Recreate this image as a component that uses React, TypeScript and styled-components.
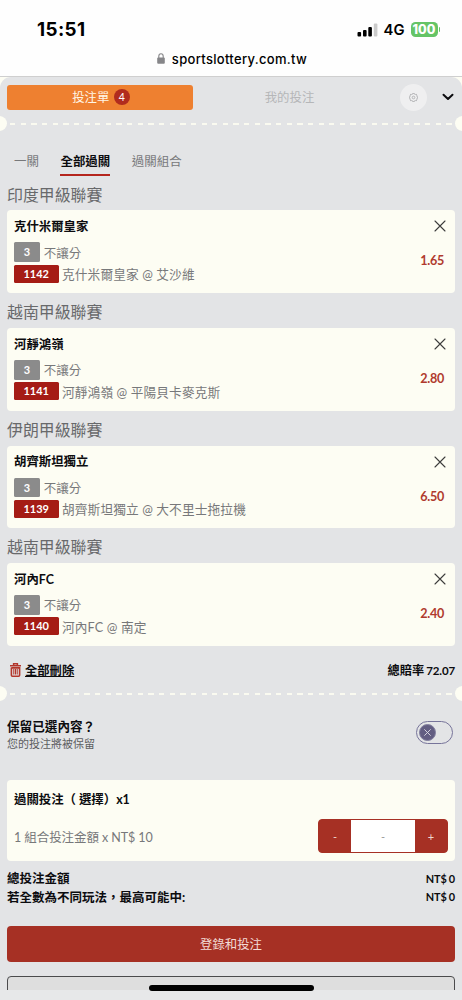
import React from 'react';
import styled, { createGlobalStyle } from 'styled-components';

const red = '#a63024';
const cream = '#fdfdf3';
const gray = '#e3e4e6';

const Global = createGlobalStyle`
  * { box-sizing: border-box; }
  body { margin: 0; background: ${gray}; font-family: Lato, "Noto Sans CJK TC", sans-serif; color: #0c0c0f; }
  button { font: inherit; border: 0; padding: 0; margin: 0; background: none; color: inherit; display: flex; align-items: center; justify-content: center; }
`;

const Screen = styled.div`
  width: 462px;
  height: 1000px;
  overflow: hidden;
  position: relative;
  display: flex;
  flex-direction: column;
  white-space: nowrap;
`;

const BrowserBar = styled.header`
  height: 77px;
  flex: none;
  background: #fefefe;
  border-bottom: 1px solid #cfcfcf;
  font-family: Inter, "Liberation Sans", sans-serif;
  color: #000;
`;

const StatusRow = styled.div`
  display: flex;
  align-items: center;
  height: 48px;
  padding: 11px 22px 0 37px;
`;

const Clock = styled.div`
  flex: 1;
  font-size: 18.8px;
  font-weight: 700;
  letter-spacing: 0.4px;
`;

const Network = styled.div`
  font-size: 14.8px;
  font-weight: 600;
  margin: 0 6px 0 6px;
`;

const Battery = styled.div`
  display: flex;
  align-items: center;
  gap: 1px;
`;

const BatteryLevel = styled.div`
  width: 27px;
  height: 15px;
  border-radius: 4.5px;
  background: #65c466;
  color: #fff;
  font-size: 12.5px;
  font-weight: 800;
  line-height: 15px;
  text-align: center;
`;

const BatteryTip = styled.div`
  width: 1.5px;
  height: 5px;
  border-radius: 0 2px 2px 0;
  background: #65c466;
`;

const AddressRow = styled.div`
  display: flex;
  justify-content: center;
  align-items: center;
  gap: 7px;
  height: 21px;
  padding-left: 2px;
  font-size: 13px;
  font-weight: 500;
  letter-spacing: 0.32px;
`;

const Corners = styled.div`
  background: ${cream};
  flex: 1;
  min-height: 0;
`;

const Slip = styled.main`
  height: 913px;
  overflow: hidden;
  background: ${gray};
  border-radius: 11px 11px 0 0;
  padding: 7px 7px 0;
  display: flex;
  flex-direction: column;
`;

const Header = styled.div`
  display: flex;
  align-items: center;
  height: 26px;
  flex: none;
`;

const SlipTab = styled.button`
  && {
    width: 186px;
    height: 25px;
    padding-left: 2px;
    border-radius: 3px;
    background: #ee8030;
    color: #fff6e6;
    font-size: 12.4px;
    gap: 4.5px;
  }
`;

const Count = styled.span`
  width: 16px;
  height: 16px;
  border-radius: 50%;
  background: #b12c1e;
  color: #fff;
  font-size: 10.5px;
  line-height: 16px;
  text-align: center;
`;

const MyBets = styled.button`
  && {
    width: 193px;
    color: #b5b6b8;
    font-size: 12.4px;
  }
`;

const GearButton = styled.button`
  && {
    width: 27px;
    height: 27px;
    margin-left: 14px;
    border-radius: 50%;
    background: #efeff0;
  }
`;

const Collapse = styled.button`
  && { margin-left: 15px; }
`;

const Perforation = styled.div<{ $top: number }>`
  display: flex;
  align-items: center;
  height: 15px;
  flex: none;
  margin: ${p => p.$top}px -15px 0;
`;

const Notch = styled.i`
  width: 15px;
  height: 15px;
  flex: none;
  border-radius: 50%;
  background: ${cream};
`;

const Dashes = styled.i`
  flex: 1;
  height: 2px;
  margin: 1px 2px 0 3px;
  background: repeating-linear-gradient(90deg, #fafaf0 0 5.3px, transparent 5.3px 10.64px);
`;

const Tabs = styled.nav`
  display: flex;
  gap: 21.6px;
  height: 44.6px;
  padding: 20px 0 0 7px;
  flex: none;
`;

const Tab = styled.button<{ $active?: boolean }>`
  && {
    height: 25px;
    padding-bottom: 3px;
    font-size: 12.45px;
    font-weight: ${p => (p.$active ? 700 : 400)};
    color: ${p => (p.$active ? '#0c0c0f' : '#77787a')};
    border-bottom: 2.5px solid ${p => (p.$active ? '#b5261e' : 'transparent')};
    align-items: flex-end;
    line-height: 18px;
  }
`;

const League = styled.section`
  height: 117.6px;
  flex: none;
`;

const LeagueName = styled.h2`
  margin: 0;
  height: 34.8px;
  padding-top: 7px;
  line-height: 24px;
  font-size: 15.9px;
  font-weight: 400;
  color: #68696b;
`;

const Card = styled.article`
  display: flex;
  justify-content: space-between;
  height: 82.8px;
  border-radius: 4px;
  background: ${cream};
  padding: 7.4px 7px 0;
`;

const PickInfo = styled.div`
  display: flex;
  flex-direction: column;
  padding-top: 0.3px;
`;

const Team = styled.h3`
  margin: 0 0 5.1px;
  font-size: 12.4px;
  line-height: 18px;
  font-weight: 700;
`;

const Line = styled.div<{ $wide?: boolean }>`
  display: flex;
  align-items: center;
  gap: ${p => (p.$wide ? 3.5 : 4)}px;
  height: ${p => (p.$wide ? 21 : 22)}px;
  font-size: ${p => (p.$wide ? 12.7 : 12.5)}px;
  letter-spacing: ${p => (p.$wide ? 0.12 : 0)}px;
  color: #77787a;
`;

const Tag = styled.span<{ $red?: boolean }>`
  width: ${p => (p.$red ? 44.5 : 25.7)}px;
  height: ${p => (p.$red ? 18 : 19.5)}px;
  line-height: ${p => (p.$red ? 18 : 19.5)}px;
  border-radius: 1.5px;
  background: ${p => (p.$red ? '#a51c15' : '#8b8b8b')};
  color: #fff;
  font-size: 11px;
  font-weight: 700;
  letter-spacing: 0;
  text-align: center;
`;

const PickSide = styled.div`
  display: flex;
  flex-direction: column;
  align-items: flex-end;
  padding: 2.6px 2px 0 0;
`;

const Odds = styled.strong`
  margin: 20px 2px 0 0;
  line-height: 18px;
  font-size: 12.6px;
  letter-spacing: -0.3px;
  font-weight: 700;
  color: #b03a2e;
`;

const Summary = styled.div`
  display: flex;
  justify-content: space-between;
  align-items: center;
  height: 22px;
  flex: none;
  margin-top: 13px;
  font-size: 12.3px;
  font-weight: 700;
`;

const DeleteAll = styled.button`
  && { gap: 4px; padding-left: 3px; }
  span { text-decoration: underline; text-underline-offset: 1px; text-decoration-thickness: 1px; }
`;

const TotalOdds = styled.div`
  font-size: 12.2px;
  small { font-size: 11.5px; letter-spacing: -0.15px; margin-left: -0.8px; }
`;

const Keep = styled.div`
  display: flex;
  justify-content: space-between;
  align-items: flex-start;
  height: 79.4px;
  flex: none;
  padding: 16px 2px 0 0;
`;

const KeepTitle = styled.div`
  font-size: 12.6px;
  font-weight: 700;
  line-height: 20px;
`;

const KeepHint = styled.div`
  font-size: 11px;
  line-height: 14px;
  color: #5c5d5f;
`;

const Toggle = styled.button`
  && {
    width: 37px;
    height: 23px;
    margin-top: 4px;
    border: 1px solid #77749a;
    border-radius: 12px;
    justify-content: flex-start;
    padding-left: 2px;
  }
`;

const Knob = styled.span`
  width: 17px;
  height: 17px;
  border: 1px solid #8481a0;
  border-radius: 50%;
  background: #625d82;
  display: flex;
  align-items: center;
  justify-content: center;
`;

const StakeCard = styled.section`
  height: 81px;
  flex: none;
  border-radius: 4px;
  background: ${cream};
  padding: 10.5px 7px 0;
`;

const StakeTitle = styled.h3`
  margin: 0;
  font-size: 12.4px;
  line-height: 18px;
  font-weight: 700;
`;

const StakeRow = styled.div`
  display: flex;
  justify-content: space-between;
  align-items: center;
  height: 34px;
  margin-top: 10.5px;
  font-size: 12.5px;
  letter-spacing: -0.08px;
  color: #77787a;
`;

const StakeText = styled.span`
  padding-top: 1px;
`;

const Stepper = styled.div`
  display: flex;
  width: 130px;
  height: 34px;
  border: 1px solid ${red};
  border-radius: 4px;
  background: ${red};
`;

const Step = styled.button`
  && { width: 32px; padding-top: 1px; color: #eed5cf; font-size: 11px; }
`;

const Amount = styled.div`
  flex: 1;
  background: #fff;
  text-align: center;
  line-height: 34px;
  height: 32px;
  font-size: 11px;
  color: #999;
`;

const Totals = styled.div`
  flex: none;
  height: 64.6px;
  padding-top: 7px;
`;

const TotalLine = styled.div`
  display: flex;
  justify-content: space-between;
  align-items: center;
  height: 18.7px;
  font-size: 12.5px;
  font-weight: 700;
`;

const Money = styled.span`
  font-size: 10.9px;
  padding-top: 1px;
  word-spacing: -0.9px;
`;

const Login = styled.button`
  && {
    height: 36px;
    flex: none;
    border-radius: 4px;
    background: ${red};
    color: #f3dcd7;
    font-size: 12.4px;
    padding-top: 1px;
  }
`;

const OutlineButton = styled.button`
  && {
    height: 36px;
    flex: none;
    margin-top: 14px;
    border: 1px solid #4b4b4d;
    border-radius: 4px;
    background: #dedede;
  }
`;

const SafeArea = styled.div`
  height: 10px;
  background: #e7e8e9;
`;

const HomeBar = styled.div`
  position: absolute;
  left: 149px;
  bottom: 9px;
  width: 165px;
  height: 6px;
  border-radius: 3px;
  background: #000;
`;

const picks = [
  { league: '印度甲級聯賽', team: '克什米爾皇家', id: '1142', match: '克什米爾皇家 @ 艾沙維', odds: '1.65' },
  { league: '越南甲級聯賽', team: '河靜鴻嶺', id: '1141', match: '河靜鴻嶺 @ 平陽貝卡麥克斯', odds: '2.80' },
  { league: '伊朗甲級聯賽', team: '胡齊斯坦獨立', id: '1139', match: '胡齊斯坦獨立 @ 大不里士拖拉機', odds: '6.50' },
  { league: '越南甲級聯賽', team: '河內FC', id: '1140', match: '河內FC @ 南定', odds: '2.40' },
];

const Cross = ({ size, color, width }: { size: number; color: string; width: number }) => (
  <svg width={size} height={size} viewBox="0 0 12 12" fill="none" stroke={color} strokeWidth={width} strokeLinecap="round">
    <path d="M1 1 11 11M11 1 1 11" />
  </svg>
);

const Signal = () => (
  <svg width="21" height="14" viewBox="0 0 21 14">
    <rect x="0.5" y="9" width="3.6" height="4.5" rx="1" />
    <rect x="6" y="7" width="3.6" height="6.5" rx="1" />
    <rect x="11.3" y="4" width="3.6" height="9.5" rx="1" />
    <rect x="16.8" y="0.5" width="3.6" height="13" rx="1" fill="#cbcbcb" />
  </svg>
);

const Lock = () => (
  <svg width="8" height="11" viewBox="0 0 8 11">
    <rect x="0.2" y="4.6" width="7.6" height="6.2" rx="1" fill="#868689" />
    <path d="M1.8 5V3.2a2.2 2.4 0 0 1 4.4 0V5" fill="none" stroke="#868689" strokeWidth="1.1" />
  </svg>
);

const Gear = () => (
  <svg width="9" height="9" viewBox="0 0 24 24" fill="none" stroke="#b2b3b5" strokeWidth="2.6">
    <path d="M9.5 3 10 1h4l.5 2 2.5 1 2-1 2.5 2.5-1 2 1 2.500 2 .5v3l-2 .5-1 2.500 1 2-2.500 2.500-2-1-2.500 1-.5 2h-4l-.5-2-2.500-1-2 1-2.500-2.500 1-2-1-2.500-2-.5v-3l2-.5 1-2.500-1-2L5 3l2 1z" />
    <circle cx="12" cy="12" r="3.500" />
  </svg>
);

const Trash = () => (
  <svg width="11" height="14" viewBox="0 0 11 14" fill="none" stroke="#b3372c">
    <path d="M0 2.700h11M3.600 2.500V.8h3.800v1.700" strokeWidth="1.500" />
    <path d="M1.400 4.500v7.700a1 1 0 0 0 1 1h6.200a1 1 0 0 0 1-1V4.900H1.400" strokeWidth="1.600" />
    <path d="M3.800 6v5.500M5.500 6v5.500M7.200 6v5.500" strokeWidth="1.050" />
  </svg>
);

const Divider = ({ top }: { top: number }) => (
  <Perforation $top={top}>
    <Notch />
    <Dashes />
    <Notch />
  </Perforation>
);

export default function App() {
  return (
    <>
      <Global />
      <Screen>
        <BrowserBar>
          <StatusRow>
            <Clock>15:51</Clock>
            <Signal />
            <Network>4G</Network>
            <Battery>
              <BatteryLevel>100</BatteryLevel>
              <BatteryTip />
            </Battery>
          </StatusRow>
          <AddressRow>
            <Lock />
            sportslottery.com.tw
          </AddressRow>
        </BrowserBar>
        <Corners>
          <Slip>
            <Header>
              <SlipTab>投注單<Count>4</Count></SlipTab>
              <MyBets>我的投注</MyBets>
              <GearButton aria-label="設定"><Gear /></GearButton>
              <Collapse aria-label="收合">
                <svg width="12" height="8" viewBox="0 0 12 8" fill="none" stroke="#0c0c0f" strokeWidth="2" strokeLinecap="round" strokeLinejoin="round">
                  <path d="M1.500 1.700 6 6l4.500-4.300" />
                </svg>
              </Collapse>
            </Header>
            <Divider top={6} />
            <Tabs>
              <Tab>一關</Tab>
              <Tab $active>全部過關</Tab>
              <Tab>過關組合</Tab>
            </Tabs>
            {picks.map(p => (
              <League key={p.id}>
                <LeagueName>{p.league}</LeagueName>
                <Card>
                  <PickInfo>
                    <Team>{p.team}</Team>
                    <Line><Tag>3</Tag>不讓分</Line>
                    <Line $wide><Tag $red>{p.id}</Tag>{p.match}</Line>
                  </PickInfo>
                  <PickSide>
                    <Cross size={12} color="#3c3c3c" width={1.1} />
                    <Odds>{p.odds}</Odds>
                  </PickSide>
                </Card>
              </League>
            ))}
            <Summary>
              <DeleteAll><Trash /><span>全部刪除</span></DeleteAll>
              <TotalOdds>總賠率 <small>72.07</small></TotalOdds>
            </Summary>
            <Divider top={5} />
            <Keep>
              <div>
                <KeepTitle>保留已選內容？</KeepTitle>
                <KeepHint>您的投注將被保留</KeepHint>
              </div>
              <Toggle aria-label="保留">
                <Knob><Cross size={7} color="#d9d8e2" width={1.6} /></Knob>
              </Toggle>
            </Keep>
            <StakeCard>
              <StakeTitle>過關投注（ 選擇）x1</StakeTitle>
              <StakeRow>
                <StakeText>1 組合投注金額 x NT$ 10</StakeText>
                <Stepper>
                  <Step>-</Step>
                  <Amount>-</Amount>
                  <Step>+</Step>
                </Stepper>
              </StakeRow>
            </StakeCard>
            <Totals>
              <TotalLine>總投注金額<Money>NT$ 0</Money></TotalLine>
              <TotalLine>若全數為不同玩法，最高可能中:<Money>NT$ 0</Money></TotalLine>
            </Totals>
            <Login>登錄和投注</Login>
            <OutlineButton aria-label="更多" />
          </Slip>
          <SafeArea />
        </Corners>
        <HomeBar />
      </Screen>
    </>
  );
}
